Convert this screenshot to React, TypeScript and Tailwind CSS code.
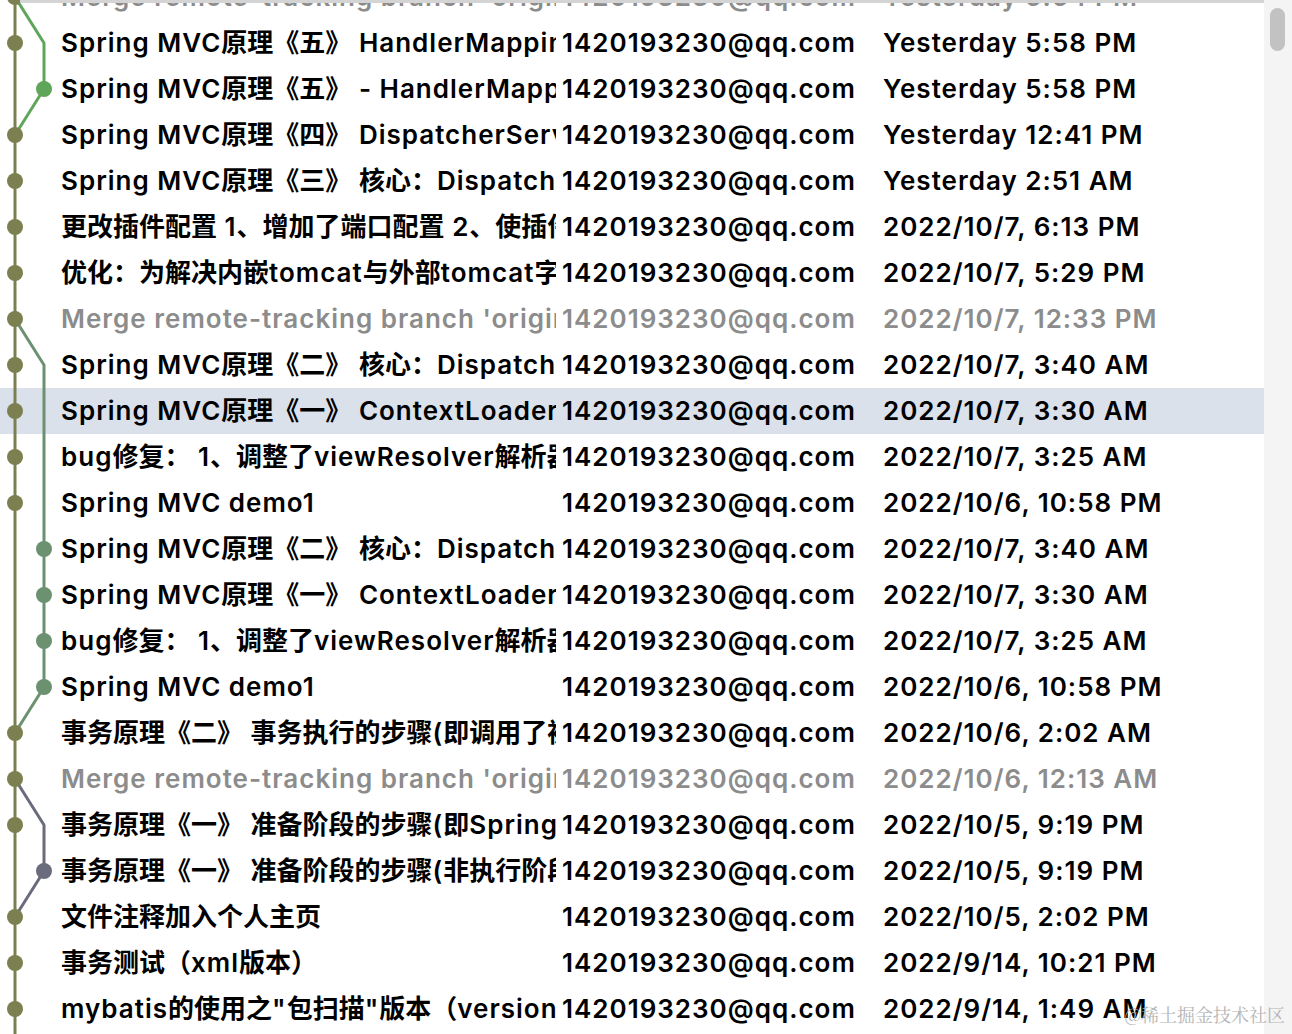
import React from "react";

type Row = {
  msg: string;
  date: string;
  merge?: boolean;
  selected?: boolean;
};

const AUTHOR = "1420193230@qq.com";

const rows: Row[] = [
  { msg: "Merge remote-tracking branch 'origin/master'", date: "Yesterday 5:54 PM", merge: true },
  { msg: "Spring MVC原理《五》 HandlerMapping", date: "Yesterday 5:58 PM" },
  { msg: "Spring MVC原理《五》 - HandlerMapping", date: "Yesterday 5:58 PM" },
  { msg: "Spring MVC原理《四》 DispatcherServlet", date: "Yesterday 12:41 PM" },
  { msg: "Spring MVC原理《三》 核心：DispatcherServlet", date: "Yesterday 2:51 AM" },
  { msg: "更改插件配置 1、增加了端口配置 2、使插件支持", date: "2022/10/7, 6:13 PM" },
  { msg: "优化：为解决内嵌tomcat与外部tomcat字符集", date: "2022/10/7, 5:29 PM" },
  { msg: "Merge remote-tracking branch 'origin/master'", date: "2022/10/7, 12:33 PM", merge: true },
  { msg: "Spring MVC原理《二》 核心：DispatcherServlet", date: "2022/10/7, 3:40 AM" },
  { msg: "Spring MVC原理《一》 ContextLoaderListener", date: "2022/10/7, 3:30 AM", selected: true },
  { msg: "bug修复： 1、调整了viewResolver解析器", date: "2022/10/7, 3:25 AM" },
  { msg: "Spring MVC demo1", date: "2022/10/6, 10:58 PM" },
  { msg: "Spring MVC原理《二》 核心：DispatcherServlet", date: "2022/10/7, 3:40 AM" },
  { msg: "Spring MVC原理《一》 ContextLoaderListener", date: "2022/10/7, 3:30 AM" },
  { msg: "bug修复： 1、调整了viewResolver解析器", date: "2022/10/7, 3:25 AM" },
  { msg: "Spring MVC demo1", date: "2022/10/6, 10:58 PM" },
  { msg: "事务原理《二》 事务执行的步骤(即调用了被代理", date: "2022/10/6, 2:02 AM" },
  { msg: "Merge remote-tracking branch 'origin/master'", date: "2022/10/6, 12:13 AM", merge: true },
  { msg: "事务原理《一》 准备阶段的步骤(即Spring启动", date: "2022/10/5, 9:19 PM" },
  { msg: "事务原理《一》 准备阶段的步骤(非执行阶段)", date: "2022/10/5, 9:19 PM" },
  { msg: "文件注释加入个人主页", date: "2022/10/5, 2:02 PM" },
  { msg: "事务测试（xml版本）", date: "2022/9/14, 10:21 PM" },
  { msg: "mybatis的使用之\"包扫描\"版本（version 2）", date: "2022/9/14, 1:49 AM" },
  { msg: "mybatis的使用之\"mapper\"版本", date: "2022/9/13, 11:02 PM" },
];

const ROW_H = 46;
const MAIN_X = 15;
const SIDE_X = 44;
const cy = (i: number) => 23 + ROW_H * i;

const MAIN = "#7c8050";

const branches = [
  { from: 0, to: 3, dots: [2], color: "#5fa55a" },
  { from: 7, to: 16, dots: [12, 13, 14, 15], color: "#6b9170" },
  { from: 17, to: 20, dots: [19], color: "#6a6b7c" },
];

const mainDots = [0, 1, 3, 4, 5, 6, 7, 8, 9, 10, 11, 16, 17, 18, 20, 21, 22, 23];

const CJK = /([\u3000-\u303f\u4e00-\u9fff\uff00-\uffef]+)/;

// latin glyphs get extra tracking to mimic the system font; CJK runs stay tight
function Message({ text }: { text: string }) {
  return (
    <>
      {text.split(CJK).map((part, i) =>
        CJK.test(part) ? (
          <span key={i} className="tracking-normal">
            {part}
          </span>
        ) : (
          <span key={i}>{part}</span>
        ),
      )}
    </>
  );
}

function Graph() {
  const h = rows.length * ROW_H;
  return (
    <svg
      width="60"
      height={h}
      viewBox={`0 0 60 ${h}`}
      className="pointer-events-none absolute left-0 top-0"
      aria-hidden="true"
    >
      <line x1={MAIN_X} y1={0} x2={MAIN_X} y2={h} stroke={MAIN} strokeWidth="3" />
      {branches.map((b) => (
        <polyline
          key={b.from}
          points={`${MAIN_X},${cy(b.from)} ${SIDE_X},${cy(b.from + 1)} ${SIDE_X},${cy(b.to - 1)} ${MAIN_X},${cy(b.to)}`}
          fill="none"
          stroke={b.color}
          strokeWidth="3"
          strokeLinejoin="round"
        />
      ))}
      {mainDots.map((i) => (
        <circle key={i} cx={MAIN_X} cy={cy(i)} r="8" fill={MAIN} />
      ))}
      {branches.map((b) =>
        b.dots.map((i) => <circle key={`${b.from}-${i}`} cx={SIDE_X} cy={cy(i)} r="8" fill={b.color} />),
      )}
    </svg>
  );
}

function LogRow({ row }: { row: Row }) {
  const tone = row.merge ? "text-[#8c8c8c]" : "text-black";
  return (
    <div
      className={`flex h-[46px] items-center whitespace-nowrap pb-[2px] pl-[61px] ${tone} ${
        row.selected ? "bg-[#dae1eb]" : ""
      }`}
    >
      <div className="w-[495px] shrink-0 overflow-hidden">
        <Message text={row.msg} />
      </div>
      <div className="ml-[6px] w-[315px] shrink-0 overflow-hidden">{AUTHOR}</div>
      <div className="ml-[6px] shrink-0">{row.date}</div>
    </div>
  );
}

export default function App() {
  return (
    <div
      className="relative flex h-[1034px] w-full overflow-hidden bg-white text-[26px] font-semibold tracking-[1px]"
      style={{ fontFamily: 'Inter, "Noto Sans CJK SC", sans-serif' }}
    >
      <div className="relative flex-1 overflow-hidden">
        <div className="relative mt-[-26px]">
          {rows.map((r, i) => (
            <LogRow key={i} row={r} />
          ))}
          <Graph />
        </div>
        <div className="absolute left-[20px] right-0 top-0 h-[3px] bg-[#d4d4d4]" />
      </div>
      <div className="w-[28px] shrink-0 bg-[#f4f4f4] pt-[8px]">
        <div className="ml-[6px] h-[43px] w-[15px] rounded-full bg-[#c2c2c2]" />
      </div>
      <div
        className="absolute bottom-[6px] right-[7px] text-[18px] font-normal tracking-normal text-[#b4b4b4]"
        style={{ fontFamily: '"Noto Serif CJK SC", "Noto Sans CJK SC", serif' }}
      >
        @稀土掘金技术社区
      </div>
    </div>
  );
}
